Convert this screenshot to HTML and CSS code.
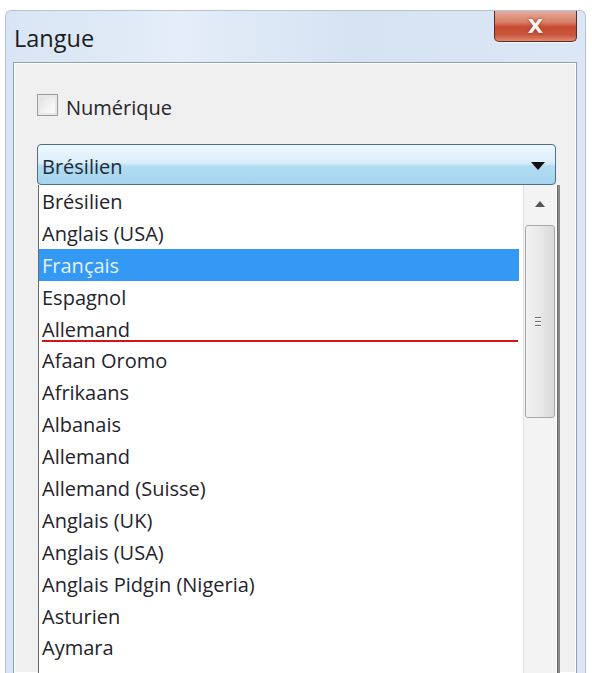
FILE: index.html
```html
<!DOCTYPE html>
<html lang="fr">
<head>
<meta charset="utf-8">
<title>Langue</title>
<link rel="stylesheet" href="styles.css">
</head>
<body>
<div class="window">
  <div class="titlebar">
    <div class="title">Langue</div>
    <div class="close-btn"><span class="close-x">X</span></div>
  </div>
  <div class="client">
    <label class="check-row">
      <span class="checkbox"></span>
      <span class="check-label">Numérique</span>
    </label>
    <div class="combo">
      <span class="combo-text">Brésilien</span>
      <svg class="combo-arrow" width="14" height="8" viewBox="0 0 14 8"><path d="M0 0 H14 L7 8 Z" fill="#111"/></svg>
    </div>
    <div class="dropdown">
      <ul class="items">
        <li class="item">Brésilien</li>
        <li class="item">Anglais (USA)</li>
        <li class="item selected">Français</li>
        <li class="item">Espagnol</li>
        <li class="item marked">Allemand</li>
        <li class="item">Afaan Oromo</li>
        <li class="item">Afrikaans</li>
        <li class="item">Albanais</li>
        <li class="item">Allemand</li>
        <li class="item">Allemand (Suisse)</li>
        <li class="item">Anglais (UK)</li>
        <li class="item">Anglais (USA)</li>
        <li class="item">Anglais Pidgin (Nigeria)</li>
        <li class="item">Asturien</li>
        <li class="item">Aymara</li>
      </ul>
      <div class="scrollbar">
        <div class="sb-up">
          <svg width="10" height="6" viewBox="0 0 10 6"><path d="M0 6 L5 0 L10 6 Z" fill="#555"/></svg>
        </div>
        <div class="sb-thumb">
          <div class="grip"><i></i><i></i><i></i></div>
        </div>
        <div class="sb-track"></div>
      </div>
    </div>
  </div>
</div>
</body>
</html>
```
FILE: styles.css
```css
html, body {
  margin: 0;
  padding: 0;
  background: #ffffff;
  overflow: hidden;
}
body {
  width: 592px;
  height: 673px;
  font-family: "Open Sans", "Noto Sans", sans-serif;
  color: #24242c;
}
.window {
  margin: 10px 0 0 5px;
  width: 581px;
  height: 663px;
  border: 1px solid #b4c3d6;
  border-bottom: none;
  border-radius: 6px 6px 0 0;
  background: linear-gradient(90deg, #d8e5f4 0%, #e4edf8 30%, #d6e3f3 60%, #dbe7f5 100%);
  display: flex;
  flex-direction: column;
  box-sizing: border-box;
  overflow: hidden;
}
.titlebar {
  display: flex;
  justify-content: space-between;
  align-items: flex-start;
  flex: none;
  height: 51px;
  padding-left: 8px;
  padding-right: 8px;
}
.title {
  font-size: 23.5px;
  line-height: 26px;
  margin-top: 14px;
  color: #1b1b22;
}
.close-btn {
  width: 81px;
  height: 31px;
  margin-top: -1px;
  border: 1px solid #5e2a22;
  border-top: none;
  border-radius: 0 0 5px 5px;
  background: linear-gradient(180deg, #e8b0a2 0%, #d77e68 40%, #c64a30 55%, #c9563c 80%, #e08a70 100%);
  display: flex;
  align-items: center;
  justify-content: center;
  box-shadow: 0 1px 0 rgba(255,255,255,0.6);
}
.close-x {
  font-family: "DejaVu Sans", sans-serif;
  font-weight: bold;
  font-size: 20px;
  color: #f6f2f0;
  text-shadow: 0 0 3px #8a3020;
  line-height: 1;
}
.client {
  margin: 0 8px 0 7px;
  flex: 1;
  min-height: 0;
  border: 1px solid #8f9fb2;
  border-bottom: none;
  box-shadow: inset 0 0 0 1px #ffffff;
  background: #f0f0f0;
  padding: 31px 0 0 23px;
  display: flex;
  flex-direction: column;
  align-items: flex-start;
}
.check-row {
  display: flex;
  align-items: center;
  gap: 8px;
  height: 22px;
}
.checkbox {
  width: 19px;
  height: 20px;
  border: 1px solid #9c9c9c;
  background: linear-gradient(135deg, #dcdcdc 0%, #f4f4f4 60%, #ffffff 100%);
  box-shadow: inset 0 0 0 2px #e8e8e8;
}
.check-label {
  font-size: 20px;
  color: #25252d;
  position: relative;
  top: 2px;
}
.combo {
  margin-top: 28px;
  flex: none;
  border: 1px solid #4f6f86;
  border-radius: 4px;
  background: linear-gradient(180deg, #eef7fd 0%, #dbeffa 45%, #b2dcf2 55%, #a6d4ee 100%);
  display: flex;
  align-items: center;
  justify-content: space-between;
  padding: 3px 10px 0 4px;
  box-sizing: border-box;
  width: 519px;
  height: 41px;
}
.combo-text {
  font-size: 20px;
  color: #1f2a36;
}
.combo-arrow {
  margin-top: -1px;
}
.dropdown {
  margin-left: 1px;
  width: 518px;
  flex: 1;
  min-height: 0;
  border: 1px solid #6b6b6b;
  border-top: none;
  border-bottom: none;
  background: #ffffff;
  display: flex;
  box-shadow: 2px 0 0 #8a8a8a;
}
.items {
  list-style: none;
  margin: 0;
  padding: 0;
  width: 480px;
}
.item {
  position: relative;
  height: 28.9px;
  line-height: 28.9px;
  padding: 3px 0 0 3px;
  font-size: 20px;
  color: #24242c;
  white-space: nowrap;
}
.item.selected {
  background: #3399f5;
  color: #e6f0ff;
}
.item.marked::after {
  content: "";
  position: absolute;
  left: 3px;
  right: 1px;
  bottom: 2px;
  height: 2px;
  background: #d4141e;
}
.scrollbar {
  margin-left: 4px;
  width: 32px;
  display: flex;
  flex-direction: column;
  background: #f3f3f3;
  border-left: 1px solid #e2e2e2;
}
.sb-up {
  height: 38px;
  display: flex;
  align-items: center;
  justify-content: center;
}
.sb-thumb {
  margin: 2px 1px 0 1px;
  height: 191px;
  border: 1px solid #a8a8a8;
  border-radius: 3px;
  background: linear-gradient(90deg, #f2f2f2 0%, #e8e8e8 50%, #d9d9d9 100%);
  display: flex;
  align-items: center;
  justify-content: center;
}
.grip {
  display: flex;
  flex-direction: column;
  gap: 2px;
  margin-left: -4px;
}
.grip i {
  display: block;
  width: 6px;
  height: 1px;
  background: #6e6e6e;
  border-bottom: 1px solid #ffffff;
}
.sb-track {
  flex: 1;
}
```
